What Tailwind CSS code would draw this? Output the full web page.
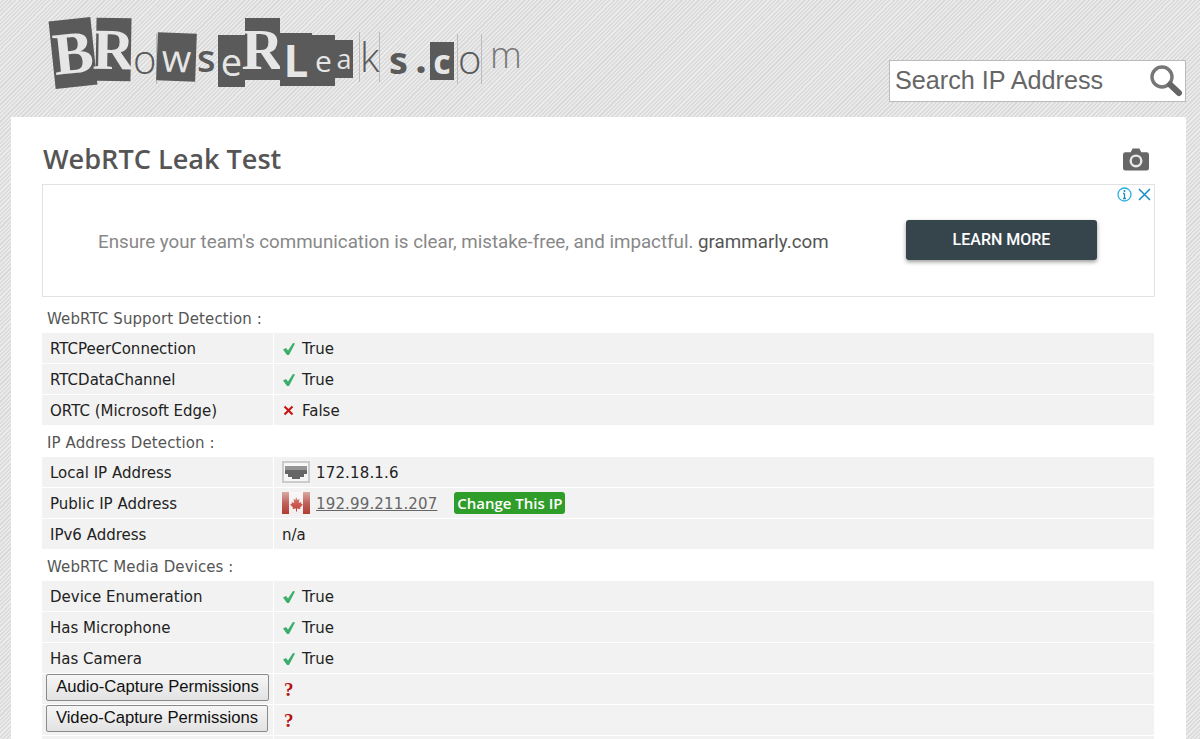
<!DOCTYPE html>
<html><head><meta charset="utf-8"><title>WebRTC Leak Test</title>
<script src="https://cdn.jsdelivr.net/npm/@tailwindcss/browser@4"></script></head>
<body class="h-[739px] overflow-hidden bg-[#e4e4e4] bg-[repeating-linear-gradient(135deg,#ebebeb_0px,#ebebeb_1.5px,#dadada_1.5px,#dadada_3px)] font-['DejaVu_Sans',sans-serif] text-[15px] text-[#222]">
<header class="relative h-[117px]">
  <a class="absolute left-0 top-0 block h-[117px] w-[560px] text-[#5a5a5a]" href="#">
    <span class="absolute left-[52px] top-[19px] flex h-[68px] w-[42px] -rotate-6 items-center justify-center bg-[#5a5a5a] font-['Liberation_Serif',serif] text-[60px] font-bold text-[#e6e6e6]">B</span>
    <span class="absolute left-[96px] top-[18px] flex h-[63px] w-[35px] rotate-1 items-center justify-center bg-[#5a5a5a] font-['Liberation_Serif',serif] text-[58px] font-bold text-[#e6e6e6]">R</span>
    <span class="absolute left-[133px] top-[34px] border-r border-[#bbb] font-['Open_Sans',sans-serif] text-[40px] font-light leading-[50px]">o</span>
    <span class="absolute left-[157px] top-[33px] flex h-[48px] w-[39px] rotate-2 items-center justify-center bg-[#5a5a5a] font-['Open_Sans',sans-serif] text-[38px] text-[#e6e6e6]">w</span>
    <span class="absolute left-[197px] top-[32px] font-['Open_Sans',sans-serif] text-[38px] font-semibold leading-[50px]">s</span>
    <span class="absolute left-[218px] top-[35px] flex h-[52px] w-[27px] items-center justify-center bg-[#5a5a5a] font-['Open_Sans',sans-serif] text-[38px] text-[#e6e6e6]">e</span>
    <span class="absolute left-[245px] top-[18px] flex h-[62px] w-[35px] items-center justify-center bg-[#5a5a5a] font-['Liberation_Serif',serif] text-[58px] font-bold text-[#e6e6e6]">R</span>
    <span class="absolute left-[280px] top-[33px] flex h-[53px] w-[32px] items-center justify-center bg-[#5a5a5a] font-['Open_Sans',sans-serif] text-[44px] font-bold text-[#e6e6e6]">L</span>
    <span class="absolute left-[312px] top-[35px] flex h-[51px] w-[23px] items-center justify-center bg-[#5a5a5a] font-['Open_Sans',sans-serif] text-[30px] text-[#e6e6e6]">e</span>
    <span class="absolute left-[335px] top-[40px] flex h-[38px] w-[18px] items-center justify-center bg-[#5a5a5a] font-['Open_Sans',sans-serif] text-[27px] text-[#e6e6e6]">a</span>
    <span class="absolute left-[359px] top-[32px] border-x border-[#bbb] font-['Open_Sans',sans-serif] text-[40px] font-light leading-[50px]">k</span>
    <span class="absolute left-[389px] top-[34px] font-['Open_Sans',sans-serif] text-[38px] font-bold leading-[50px]">s</span>
    <span class="absolute left-[415px] top-[32px] font-['Open_Sans',sans-serif] text-[42px] font-bold leading-[50px]">.</span>
    <span class="absolute left-[430px] top-[42px] flex h-[38px] w-[24px] items-center justify-center bg-[#5a5a5a] font-['Open_Sans',sans-serif] text-[34px] font-bold text-[#e6e6e6]">c</span>
    <span class="absolute left-[457px] top-[34px] border-x border-[#bbb] font-['Open_Sans',sans-serif] text-[40px] font-light leading-[50px]">o</span>
    <span class="absolute left-[490px] top-[30px] font-['Open_Sans',sans-serif] text-[36px] font-light leading-[50px] text-[#777]">m</span>
  </a>
  <form class="absolute left-[889px] top-[60px] flex h-[42px] w-[297px] items-center justify-between border border-[#bbb] bg-white pl-[5px] pr-[3px]">
    <span class="font-['Liberation_Sans',sans-serif] text-[25.200px] text-[#666]">Search IP Address</span>
    <svg class="h-[32px] w-[33px]" viewBox="0 0 33 32" fill="none"><circle cx="13" cy="12" r="10" stroke="#777" stroke-width="3.400"/><path d="M21 19.500l9 8.500" stroke="#666" stroke-width="6" stroke-linecap="round"/></svg>
  </form>
</header>
<main class="mx-[11px] mr-[14px] h-[622px] overflow-hidden bg-white px-[31px]">
  <div class="flex h-[67px] items-center justify-between pr-[6px] pt-[18px]">
    <h1 class="pl-[1px] font-['Open_Sans',sans-serif] text-[27.100px] font-semibold text-[#555]">WebRTC Leak Test</h1>
    <svg class="mb-[1px] h-[23px] w-[26px]" viewBox="0 0 27 23"><path fill="#666" d="M2.500 4H8l2-4h7l2 4h5.500A2.500 2.500 0 0 1 27 6.500V20.500A2.500 2.500 0 0 1 24.500 23H2.500A2.500 2.500 0 0 1 0 20.500V6.500A2.500 2.500 0 0 1 2.500 4Z"/><circle cx="13.500" cy="13" r="5.500" fill="none" stroke="#e8e8e8" stroke-width="2.500"/></svg>
  </div>
  <section class="relative flex h-[113px] w-[1113px] items-center border border-[#e2e2e2] font-['Roboto',sans-serif]">
    <p class="ml-[55px] w-[808px] pt-[3px] text-[18.750px] text-[#888]">Ensure your team's communication is clear, mistake-free, and impactful. <span class="text-[#555]">grammarly.com</span></p>
    <span class="-mt-[2px] flex h-[40px] w-[191px] items-center justify-center rounded-[3px] bg-[#36444c] text-[16px] font-medium text-white shadow-[0_2px_4px_rgba(0,0,0,0.4)]">LEARN MORE</span>
    <svg class="absolute right-[22px] top-[2px] h-[15px] w-[15px]" viewBox="0 0 15 15" fill="none"><circle cx="7.500" cy="7.500" r="6.500" stroke="#2ab0e0" stroke-width="1.300"/><path d="M7.500 6.500v5M6 11.500h3M6 6.500h1.500" stroke="#1a8cc0" stroke-width="1.300"/><circle cx="7.500" cy="4" r="1" fill="#1a8cc0"/></svg>
    <svg class="absolute right-[2px] top-[2px] h-[15px] w-[15px]" viewBox="0 0 15 15" fill="none"><path d="M2 2l11 11M13 2L2 13" stroke="#1f8fc9" stroke-width="1.600"/></svg>
  </section>
  <div class="w-[1112px]">
    <h2 class="flex h-[36px] items-end pb-[3px] pl-[5px] text-[15px] font-normal tracking-[0.1px] text-[#555]">WebRTC Support Detection :</h2>
    <div class="flex flex-col gap-px">
      <div class="flex h-[30px] gap-px"><div class="flex w-[231px] items-center bg-[#f2f2f2] pl-[8px] pt-[3px]">RTCPeerConnection</div><div class="flex flex-1 items-center gap-[7px] bg-[#f2f2f2] pl-[9px] pt-[3px]"><svg class="-mt-[2px] h-[12px] w-[12px]" viewBox="0 0 12 12"><path fill="#3cae6b" d="M0 6.500L3 5L5 7.500L10 0L12 .5L6 12H4Z"/></svg>True</div></div>
      <div class="flex h-[30px] gap-px"><div class="flex w-[231px] items-center bg-[#f2f2f2] pl-[8px] pt-[3px]">RTCDataChannel</div><div class="flex flex-1 items-center gap-[7px] bg-[#f2f2f2] pl-[9px] pt-[3px]"><svg class="-mt-[2px] h-[12px] w-[12px]" viewBox="0 0 12 12"><path fill="#3cae6b" d="M0 6.500L3 5L5 7.500L10 0L12 .5L6 12H4Z"/></svg>True</div></div>
      <div class="flex h-[30px] gap-px"><div class="flex w-[231px] items-center bg-[#f2f2f2] pl-[8px] pt-[3px]">ORTC (Microsoft Edge)</div><div class="flex flex-1 items-center gap-[8px] bg-[#f2f2f2] pl-[9px] pt-[3px]"><svg class="-mt-[2px] h-[11px] w-[11px]" viewBox="0 0 11 11" fill="none"><path d="M1.500 1.500l8 8M9.500 1.500l-8 8" stroke="#c81010" stroke-width="2"/></svg>False</div></div>
    </div>
    <h2 class="flex h-[32px] items-end pb-[3px] pl-[5px] text-[15px] font-normal tracking-[0.1px] text-[#555]">IP Address Detection :</h2>
    <div class="flex flex-col gap-px">
      <div class="flex h-[30px] gap-px"><div class="flex w-[231px] items-center bg-[#f2f2f2] pl-[8px] pt-[3px]">Local IP Address</div><div class="flex flex-1 items-center gap-[6px] bg-[#f2f2f2] pl-[8px] pt-[3px] tracking-[0.15px]">
        <svg class="-mt-[3px] h-[22px] w-[28px]" viewBox="0 0 28 22"><rect x="1" y="1" width="26" height="20" fill="#f6f6f6" stroke="#ccc" stroke-width="2"/><path fill="#666" d="M3 5h22v8h-3v3h-4v2h-8v-2H6v-3H3Z"/><rect x="3" y="3" width="22" height="6" fill="#fff" opacity=".3"/></svg>172.18.1.6</div></div>
      <div class="flex h-[30px] gap-px"><div class="flex w-[231px] items-center bg-[#f2f2f2] pl-[8px] pt-[3px]">Public IP Address</div><div class="flex flex-1 items-center gap-[6px] bg-[#f2f2f2] pl-[8px] pt-[3px]">
        <svg class="-mt-[3px] h-[22px] w-[28px]" viewBox="0 0 28 22"><defs><linearGradient id="f" x1="0" y1="0" x2="0" y2="1"><stop offset="0" stop-color="#fff" stop-opacity=".55"/><stop offset=".5" stop-color="#fff" stop-opacity=".2"/><stop offset="1" stop-color="#fff" stop-opacity="0"/></linearGradient></defs><rect width="28" height="22" fill="#f2eeee"/><rect width="7" height="22" fill="#b03c32"/><rect x="21" width="7" height="22" fill="#b03c32"/><path fill="#c0382e" d="M14 5l1.500 3 2-1-.7 4 2.200-1 .5 2 1.500.5-3 3 .5 1.500-3.500-.5v3h-1v-3l-3.500.5.5-1.500-3-3 1.500-.5.5-2 2.200 1-.7-4 2 1Z"/><rect width="28" height="22" fill="url(#f)"/></svg>
        <a class="tracking-[0.15px] text-[#666] underline" href="#">192.99.211.207</a>
        <span class="-mt-[3px] ml-[11px] flex h-[22px] w-[111px] items-center justify-center rounded-[3px] bg-[#2f9d29] font-['Open_Sans',sans-serif] text-[15px] font-semibold text-white">Change This IP</span></div></div>
      <div class="flex h-[30px] gap-px"><div class="flex w-[231px] items-center bg-[#f2f2f2] pl-[8px] pt-[3px]">IPv6 Address</div><div class="flex flex-1 items-center bg-[#f2f2f2] pl-[8px] pt-[3px]">n/a</div></div>
    </div>
    <h2 class="flex h-[32px] items-end pb-[3px] pl-[5px] text-[15px] font-normal tracking-[0.1px] text-[#555]">WebRTC Media Devices :</h2>
    <div class="flex flex-col gap-px">
      <div class="flex h-[30px] gap-px"><div class="flex w-[231px] items-center bg-[#f2f2f2] pl-[8px] pt-[3px]">Device Enumeration</div><div class="flex flex-1 items-center gap-[7px] bg-[#f2f2f2] pl-[9px] pt-[3px]"><svg class="-mt-[2px] h-[12px] w-[12px]" viewBox="0 0 12 12"><path fill="#3cae6b" d="M0 6.500L3 5L5 7.500L10 0L12 .5L6 12H4Z"/></svg>True</div></div>
      <div class="flex h-[30px] gap-px"><div class="flex w-[231px] items-center bg-[#f2f2f2] pl-[8px] pt-[3px]">Has Microphone</div><div class="flex flex-1 items-center gap-[7px] bg-[#f2f2f2] pl-[9px] pt-[3px]"><svg class="-mt-[2px] h-[12px] w-[12px]" viewBox="0 0 12 12"><path fill="#3cae6b" d="M0 6.500L3 5L5 7.500L10 0L12 .5L6 12H4Z"/></svg>True</div></div>
      <div class="flex h-[30px] gap-px"><div class="flex w-[231px] items-center bg-[#f2f2f2] pl-[8px] pt-[3px]">Has Camera</div><div class="flex flex-1 items-center gap-[7px] bg-[#f2f2f2] pl-[9px] pt-[3px]"><svg class="-mt-[2px] h-[12px] w-[12px]" viewBox="0 0 12 12"><path fill="#3cae6b" d="M0 6.500L3 5L5 7.500L10 0L12 .5L6 12H4Z"/></svg>True</div></div>
      <div class="flex h-[30px] gap-px"><div class="flex w-[231px] items-start bg-[#f2f2f2] pl-[4px]"><button class="h-[27px] w-[223px] rounded-[2px] border border-[#8a8a8a] bg-gradient-to-b from-[#f6f6f6] to-[#e2e2e2] pb-[2px] font-['Liberation_Sans',sans-serif] text-[16.650px] leading-[20px] text-[#111]">Audio-Capture Permissions</button></div><div class="flex flex-1 items-center bg-[#f2f2f2] pl-[10px] pt-[2px] font-['Liberation_Serif',serif] text-[19px] font-bold text-[#b80f0f]">?</div></div>
      <div class="flex h-[30px] gap-px"><div class="flex w-[231px] items-start bg-[#f2f2f2] pl-[4px]"><button class="h-[27px] w-[222px] rounded-[2px] border border-[#8a8a8a] bg-gradient-to-b from-[#f6f6f6] to-[#e2e2e2] pb-[2px] font-['Liberation_Sans',sans-serif] text-[16.650px] leading-[20px] text-[#111]">Video-Capture Permissions</button></div><div class="flex flex-1 items-center bg-[#f2f2f2] pl-[10px] pt-[2px] font-['Liberation_Serif',serif] text-[19px] font-bold text-[#b80f0f]">?</div></div>
      <div class="flex h-[30px] gap-px"><div class="w-[231px] bg-[#f2f2f2]"></div><div class="flex-1 bg-[#f2f2f2]"></div></div>
    </div>
  </div>
</main>
</body></html>
